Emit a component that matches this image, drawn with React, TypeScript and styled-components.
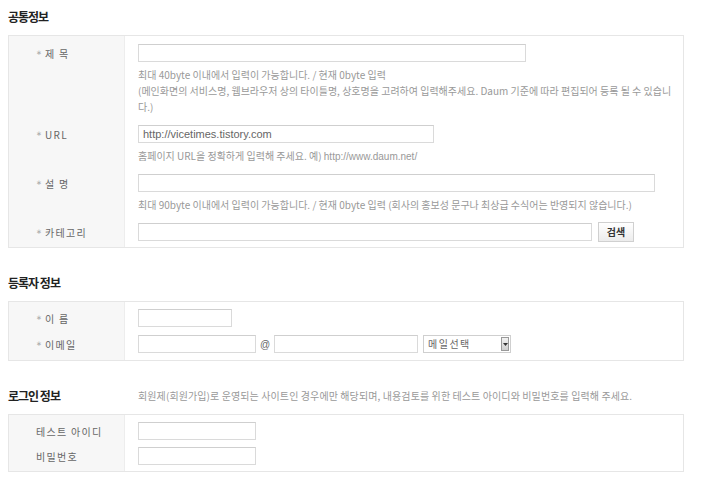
import styled, { createGlobalStyle } from 'styled-components'

const GlobalStyle = createGlobalStyle`
  html, body {
    margin: 0;
    padding: 0;
    background: #ffffff;
  }
  body {
    font-family: 'Noto Sans CJK KR', 'Liberation Sans', sans-serif;
    color: #555;
  }
`

const App = () => {
  return (
    <Page>
      <GlobalStyle />

      <Section>
        <HeaderRow>
          <Heading>공통정보</Heading>
        </HeaderRow>
        <Box>
          <Row label='제 목' required pt={8} pb={10}>
            <Input width={388} />
            <Help>
              최대 40byte 이내에서 입력이 가능합니다. / 현재 0byte 입력
              <br />
              (메인화면의 서비스명, 웹브라우저 상의 타이틀명, 상호명을 고려하여 입력해주세요. Daum 기준에 따라 편집되어 등록 될 수 있습니
              <br />
              다.)
            </Help>
          </Row>
          <Row label='URL' required pt={0} pb={10}>
            <Input width={296}>http://vicetimes.tistory.com</Input>
            <Help>
              홈페이지 URL을 정확하게 입력해 주세요. 예) <HelpUrl>http://www.daum.net/</HelpUrl>
            </Help>
          </Row>
          <Row label='설 명' required pt={0} pb={10}>
            <Input width={517} />
            <Help>
              최대 90byte 이내에서 입력이 가능합니다. / 현재 0byte 입력 (회사의 홍보성 문구나 최상급 수식어는 반영되지 않습니다.)
            </Help>
          </Row>
          <Row label='카테고리' required pt={0} pb={6}>
            <Inline>
              <Input width={454} />
              <SearchButton>검색</SearchButton>
            </Inline>
          </Row>
        </Box>
      </Section>

      <Section>
        <HeaderRow>
          <Heading>등록자 정보</Heading>
        </HeaderRow>
        <Box>
          <Row label='이 름' required pt={7} pb={8}>
            <Input width={94} />
          </Row>
          <Row label='이메일' required pt={0} pb={7}>
            <Inline>
              <Input width={118} />
              <At>@</At>
              <Input width={144} />
              <MailSelect>
                <SelectText>메일선택</SelectText>
                <SelectArrow>
                  <svg width='5' height='3' viewBox='0 0 5 3'>
                    <path d='M0 0 L5 0 L2.5 3 Z' fill='#333' />
                  </svg>
                </SelectArrow>
              </MailSelect>
            </Inline>
          </Row>
        </Box>
      </Section>

      <Section>
        <HeaderRow>
          <Heading>로그인 정보</Heading>
          <Note>
            회원제(회원가입)로 운영되는 사이트인 경우에만 해당되며, 내용검토를 위한 테스트 아이디와 비밀번호를 입력해 주세요.
          </Note>
        </HeaderRow>
        <Box>
          <Row label='테스트 아이디' pt={7} pb={7}>
            <Input width={118} />
          </Row>
          <Row label='비밀번호' pt={0} pb={6}>
            <Input width={118} />
          </Row>
        </Box>
      </Section>
    </Page>
  )
}

type RowProps = {
  label: string
  required?: boolean
  pt: number
  pb: number
  children: React.ReactNode
}

const Row = ({ label, required, pt, pb, children }: RowProps) => (
  <>
    <LabelCell $pt={pt} $pb={pb}>
      <LabelLine>
        {required && <Bullet>∗</Bullet>}
        {label}
      </LabelLine>
    </LabelCell>
    <FieldCell $pt={pt} $pb={pb}>
      {children}
    </FieldCell>
  </>
)

const Page = styled.div`
  padding: 7px 36px 20px 8px;
`

const Section = styled.section`
  & + & {
    margin-top: 25px;
  }
`

const HeaderRow = styled.div`
  display: flex;
  align-items: center;
  height: 20px;
  margin-bottom: 8px;
`

const Heading = styled.h2`
  margin: 0;
  width: 130px;
  font-size: 12px;
  line-height: 20px;
  font-weight: 700;
  letter-spacing: -1px;
  color: #222;
`

const Note = styled.p`
  margin: 0;
  font-size: 10px;
  letter-spacing: 0.1px;
  line-height: 20px;
  color: #999;
  white-space: nowrap;
`

const Box = styled.div`
  display: grid;
  grid-template-columns: 116px 1fr;
  border: 1px solid #e6e6e6;
`

const LabelCell = styled.div<{ $pt: number; $pb: number }>`
  background: #f7f7f7;
  border-right: 1px solid #ededed;
  padding: ${(p) => p.$pt}px 0 ${(p) => p.$pb}px 27px;
`

const LabelLine = styled.div`
  display: flex;
  align-items: center;
  height: 18px;
  font-size: 10px;
  letter-spacing: 1.3px;
  color: #666;
  white-space: nowrap;
`

const Bullet = styled.span`
  width: 9px;
  font-family: 'DejaVu Sans', sans-serif;
  font-size: 7px;
  line-height: 8px;
  letter-spacing: 0;
  color: #aaa;
`

const FieldCell = styled.div<{ $pt: number; $pb: number }>`
  padding: ${(p) => p.$pt}px 8px ${(p) => p.$pb}px 13px;
  min-width: 0;
`

const Input = styled.div<{ width: number }>`
  box-sizing: border-box;
  width: ${(p) => p.width}px;
  height: 18px;
  border: 1px solid #dadada;
  border-top-color: #cfcfcf;
  background: #fff;
  padding: 0 4px;
  font-family: 'Liberation Sans', sans-serif;
  font-size: 11px;
  line-height: 16px;
  color: #666;
`

const Help = styled.p`
  margin: 5px 0 0;
  font-size: 10px;
  line-height: 16px;
  letter-spacing: 0;
  color: #999;
  white-space: nowrap;
`

const HelpUrl = styled.span`
  font-family: 'Liberation Sans', sans-serif;
  font-size: 10px;
  line-height: 0;
`

const Inline = styled.div`
  display: flex;
  align-items: center;
  height: 18px;
`

const SearchButton = styled.button`
  box-sizing: border-box;
  width: 36px;
  height: 20px;
  margin-left: 6px;
  padding: 0;
  border: 1px solid #d0d0d0;
  background: linear-gradient(#ffffff, #ececec);
  font-family: 'Noto Sans CJK KR', sans-serif;
  font-size: 10px;
  font-weight: 700;
  line-height: 18px;
  color: #333;
`

const At = styled.span`
  width: 18px;
  text-align: center;
  font-family: 'Liberation Sans', sans-serif;
  font-size: 10px;
  color: #666;
`

const MailSelect = styled.div`
  box-sizing: border-box;
  display: flex;
  align-items: center;
  justify-content: space-between;
  width: 88px;
  height: 18px;
  margin-left: 5px;
  border: 1px solid #cfcfcf;
  padding: 0 1px 0 4px;
  background: #fff;
`

const SelectText = styled.span`
  font-size: 10px;
  letter-spacing: 1.5px;
  line-height: 16px;
  color: #666;
`

const SelectArrow = styled.span`
  box-sizing: border-box;
  display: flex;
  align-items: center;
  justify-content: center;
  width: 8px;
  height: 14px;
  border: 1px solid #999;
  background: linear-gradient(#f2f2f2, #cfcfcf);
`

export default App
